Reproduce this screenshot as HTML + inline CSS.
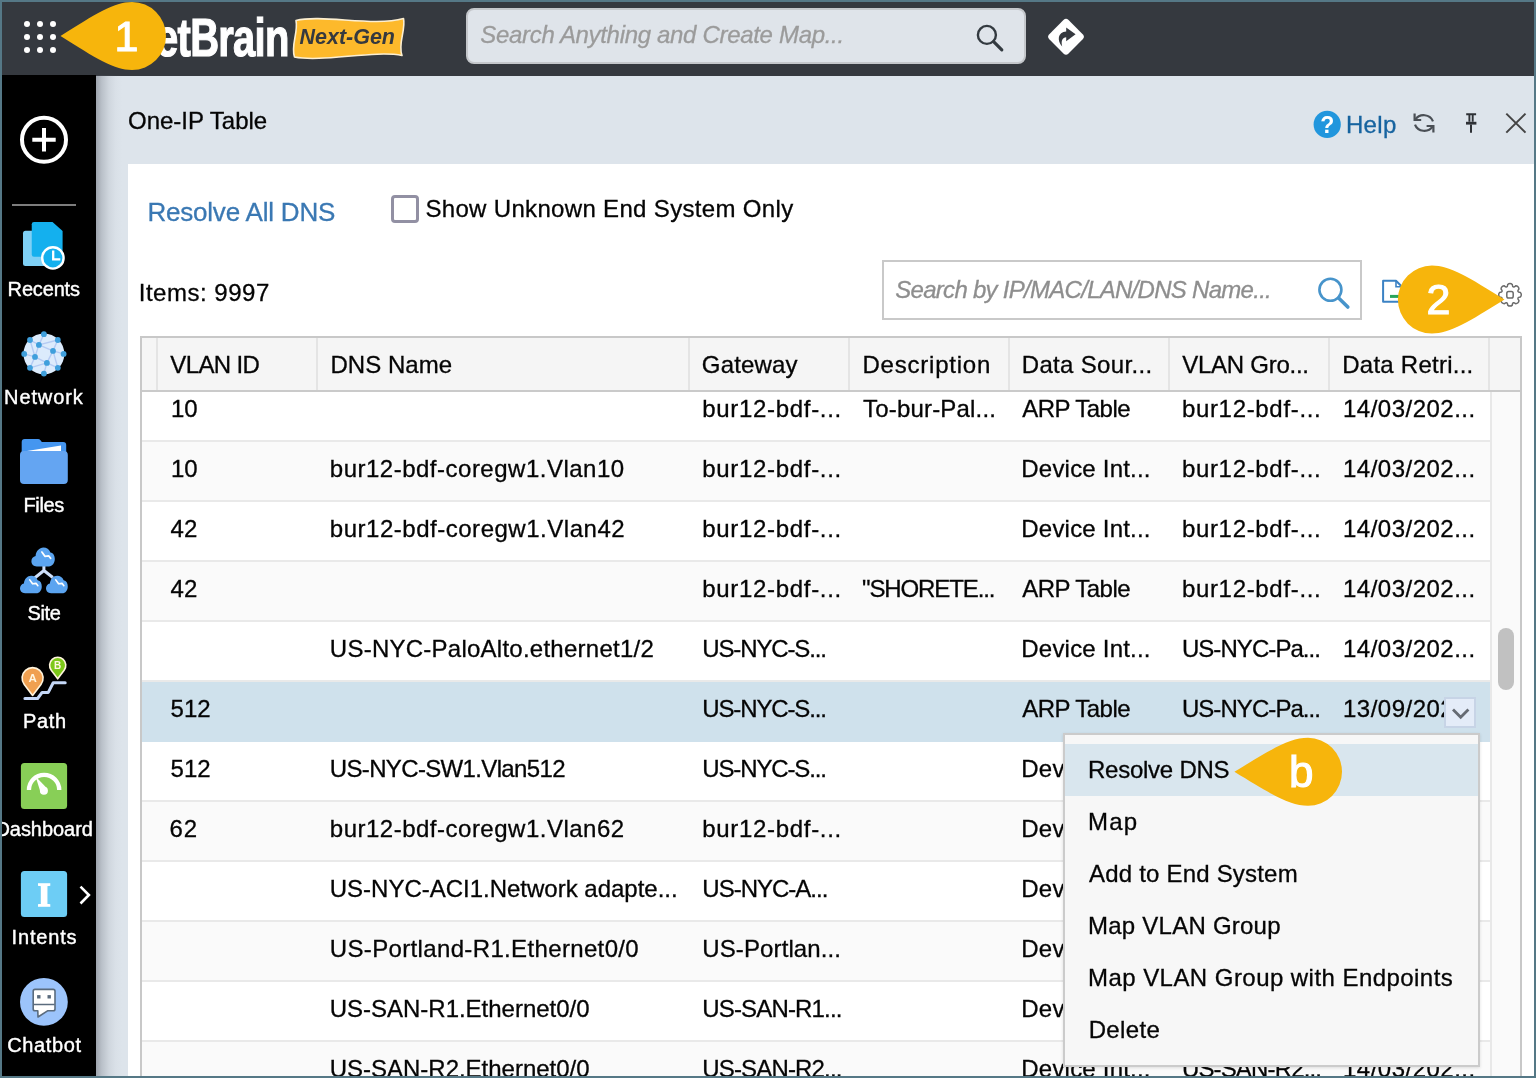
<!DOCTYPE html>
<html lang="en">
<head>
<meta charset="utf-8">
<title>One-IP Table</title>
<style>
*{box-sizing:border-box;margin:0;padding:0}
html,body{width:1536px;height:1078px;overflow:hidden}
body{position:relative;background:#dde4eb;font-family:"Liberation Sans",sans-serif;color:#111}
.abs{position:absolute}
.t{position:absolute;white-space:pre;font-weight:normal;text-decoration:none;display:block;-webkit-text-stroke:.3px currentColor}
#app{position:absolute;left:0;top:0;width:1536px;height:1078px;background:#dde4eb;overflow:hidden;will-change:transform}
#frame{position:absolute;left:0;top:0;width:1536px;height:1078px;border:2px solid #557886;pointer-events:none}
/* header */
#hdr{position:absolute;left:0;top:0;width:1536px;height:75.500px;background:#35393f}
#logo{position:absolute;left:128px;top:6.500px;font-size:54px;font-weight:bold;color:#fff;letter-spacing:-1px;-webkit-text-stroke:1.2px #fff;transform-origin:0 0;transform:scaleX(.74);white-space:nowrap;line-height:60px}
#search{position:absolute;left:466px;top:8px;width:560px;height:56px;background:#dfe4ea;border:2px solid #c4c7cb;border-radius:8px}
/* sidebar */
#side{position:absolute;left:0;top:75px;width:96px;height:1003px;background:#000;overflow:hidden}
#sideshadow{position:absolute;left:96px;top:75px;width:26px;height:1003px;background:linear-gradient(to right,rgba(70,76,88,.42),rgba(90,96,108,.27) 22%,rgba(110,116,128,.12) 50%,rgba(120,126,138,.04) 75%,rgba(120,126,138,0))}
#side .sep{position:absolute;left:12px;top:129px;width:64px;height:2px;background:#7d7d7d}
.nav{position:absolute;left:0;top:0;width:96px;height:0}
.lbl{-webkit-text-stroke:.4px #fff}
/* panel */
#panel{position:absolute;left:128px;top:164px;width:1408px;height:914px;background:#fff}
.cb{position:absolute;left:263px;top:31px;width:28px;height:28px;border:3px solid #9290a3;border-radius:4px;background:#fff}
#psearch{position:absolute;left:754px;top:96px;width:480px;height:60px;border:2px solid #c9c9c9;background:#fff}
/* table */
#tbl{position:absolute;left:12px;top:172px;width:1382px;height:760px;border:2px solid #c8c8c8;border-bottom:none;background:#fff;overflow:hidden}
#thead{position:absolute;left:0;top:0;width:1378px;height:54px;background:#f5f5f5;border-bottom:2px solid #cacaca}
#thead .vs{position:absolute;top:0;width:2px;height:52px;background:#e4e4e4}
#tbody{position:absolute;left:0;top:54px;width:1348px;height:700px;overflow:hidden}
.row{position:absolute;left:0;width:1348px;height:60px;border-bottom:2px solid #e9e9e9;background:#fff;overflow:hidden}
.row.alt{background:#fafafa}
.row.sel{background:#cfe1ec;border-bottom-color:#cfe1ec}
#vscroll{position:absolute;left:1348px;top:54px;width:30px;height:700px;background:#fafafa;border-left:2px solid #e8e8e8}
#vscroll i{position:absolute;left:6px;top:236px;width:16px;height:62px;border-radius:8px;background:#c1c1c1}
.dropbtn{position:absolute;left:1301.500px;top:14.500px;width:32px;height:31px;background:#e4ecf8;border:2px solid #c7d4e6}
/* menu */
#menu{position:absolute;left:1063px;top:733px;width:417px;height:334px;background:#f7f7f7;border:2px solid #cbcbcb;list-style:none;padding-top:9px;box-shadow:0 1px 3px rgba(0,0,0,.12)}
#menu li{position:relative;height:52px;width:413px}
#menu li.hot{background:#d9e6ee}
</style>
</head>
<body>
<div id="app">
<header id="hdr">
<svg class="abs" style="left:20px;top:16px" width="44" height="44" viewBox="20 16 44 44"><g fill="#fff"><circle cx="27" cy="24" r="3"/><circle cx="40" cy="24" r="3"/><circle cx="53" cy="24" r="3"/><circle cx="27" cy="37" r="3"/><circle cx="40" cy="37" r="3"/><circle cx="53" cy="37" r="3"/><circle cx="27" cy="50" r="3"/><circle cx="40" cy="50" r="3"/><circle cx="53" cy="50" r="3"/></g></svg>
<div id="logo">NetBrain</div>
<svg class="abs" style="left:288px;top:12px" width="124" height="52" viewBox="288 12 124 52"><path d="M296 20.5 C322 14 374 27 403.500 18.500 C406 30 397.500 44 402 55.500 C374 50 322 62.500 294.500 57 C290.500 46 298.500 32 296 20.500 Z" fill="#fdb92b" stroke="#fcefd2" stroke-width="1.6" stroke-linejoin="round"/><text x="299.5" y="43.7" font-family="Liberation Sans, sans-serif" font-weight="bold" font-style="italic" font-size="21.5" fill="#35393f" textLength="95.5" lengthAdjust="spacingAndGlyphs">Next-Gen</text></svg>
<div id="search"><span class="t" style="left:12.3px;top:12.7px;font-size:24px;line-height:24px;letter-spacing:-0.32px;color:#9b9b9b;font-style:italic;">Search Anything and Create Map...</span><svg class="abs" style="left:502px;top:8px" width="40" height="40" viewBox="970 18 40 40"><circle cx="986.9" cy="34.9" r="9" fill="none" stroke="#333a40" stroke-width="2.4"/><path d="M993.600 41.600 L1001.800 49.800" stroke="#333a40" stroke-width="3.2" stroke-linecap="round"/></svg></div>
<svg class="abs" style="left:1044px;top:14px" width="44" height="46" viewBox="1044 14 44 46"><rect x="1052.400" y="23.200" width="27.200" height="27.200" rx="3.600" transform="rotate(45 1066 36.800)" fill="#fff"/><path d="M1062.200 46.400 C1056.800 41 1057.600 32 1066.200 31.600 L1066.200 27.400 L1075.600 34.300 L1066.200 41.200 L1066.200 37.200 C1062.600 37.300 1060.800 40.500 1062.200 46.400 Z" fill="#35393f"/></svg>
</header>
<nav id="side">
<svg class="abs" style="left:18px;top:39px" width="52" height="52" viewBox="18 114 52 52"><circle cx="44" cy="139.800" r="22" fill="none" stroke="#fff" stroke-width="4"/><path d="M32.300 139.800 H55.700 M44 128.100 V151.500" stroke="#fff" stroke-width="4"/></svg>
<div class="sep"></div>
<div class="nav"><svg class="abs" style="left:20px;top:143px" width="50" height="54" viewBox="20 218 50 54"><rect x="23" y="230.800" width="30" height="35.200" rx="2.5" fill="#7fd0f5"/><path d="M34 222 H52.500 L62.600 231.100 V254.500 Q62.600 256.750 60.400 256.750 H34 Q31.750 256.750 31.750 254.500 V224.200 Q31.750 222 34 222 Z" fill="#14b0ee"/><circle cx="52.900" cy="257.900" r="10.700" fill="#14b0ee" stroke="#fff" stroke-width="2.400"/><path d="M53.200 250.600 V259.400 H60.300" fill="none" stroke="#fff" stroke-width="2.300"/></svg><span class="t lbl" style="left:7.6px;top:203.6px;font-size:20px;line-height:20px;letter-spacing:-0.16px;color:#fff;">Recents</span></div>
<div class="nav"><svg class="abs" style="left:18px;top:253px" width="52" height="52" viewBox="18 328 52 52"><circle cx="43.9" cy="353.9" r="20.400" fill="#dcebfc"/><path d="M43.9 334.2L38.9 344.9M30.0 340.0L38.9 344.9M30.0 340.0L35.0 356.9M38.9 344.9L35.0 356.9M38.9 344.9L53.0 350.9M57.8 340.0L53.0 350.9M63.6 353.9L53.0 350.9M53.0 350.9L46.9 362.9M35.0 356.9L46.9 362.9M24.2 353.9L35.0 356.9M30.0 367.8L35.0 356.9M30.0 367.8L46.9 362.9M43.9 373.6L46.9 362.9M57.8 367.8L46.9 362.9M57.8 367.8L53.0 350.9M57.8 340.0L38.9 344.9" stroke="#b5cbf3" stroke-width="1.400" fill="none"/><circle cx="43.9" cy="334.2" r="2.900" fill="#3f9fdc"/><circle cx="57.8" cy="340.0" r="2.900" fill="#3f9fdc"/><circle cx="63.6" cy="353.9" r="2.900" fill="#3f9fdc"/><circle cx="57.8" cy="367.8" r="2.900" fill="#3f9fdc"/><circle cx="43.9" cy="373.6" r="2.900" fill="#3f9fdc"/><circle cx="30.0" cy="367.8" r="2.900" fill="#3f9fdc"/><circle cx="24.2" cy="353.9" r="2.900" fill="#3f9fdc"/><circle cx="30.0" cy="340.0" r="2.900" fill="#3f9fdc"/><circle cx="38.9" cy="344.9" r="2.900" fill="#3f9fdc"/><circle cx="53.0" cy="350.9" r="2.900" fill="#3f9fdc"/><circle cx="35.0" cy="356.9" r="2.900" fill="#3f9fdc"/><circle cx="46.9" cy="362.9" r="2.900" fill="#3f9fdc"/></svg><span class="t lbl" style="left:4.1px;top:311.6px;font-size:20px;line-height:20px;letter-spacing:0.88px;color:#fff;">Network</span></div>
<div class="nav"><svg class="abs" style="left:18px;top:361px" width="52" height="50" viewBox="18 436 52 50"><path d="M24.700 439 H38 Q39.500 439 40.500 440.300 L41.800 442 H63.200 Q66.200 442 66.200 445 V470 H21.700 V442 Q21.700 439 24.700 439 Z" fill="#4596f0"/><path d="M26.900 450.900 L61 445.600 V452 H26.900 Z" fill="#fff"/><rect x="20" y="451" width="47.800" height="33" rx="4" fill="#64a5f2"/></svg><span class="t lbl" style="left:23.5px;top:419.6px;font-size:20px;line-height:20px;letter-spacing:-0.36px;color:#fff;">Files</span></div>
<div class="nav"><svg class="abs" style="left:18px;top:469px" width="52" height="52" viewBox="18 544 52 52"><path d="M43.900 565 V570.500 M43.900 570.500 L34 578.500 M43.900 570.500 L52.800 577.500" stroke="#cfe0fa" stroke-width="3" fill="none"/><g transform="translate(31.4 547.6) scale(1.0)"><path d="M5.500 18.800 C1.800 18.800 0 16.400 0 13.600 C0 10.800 1.800 8.800 4.200 8.300 C4.600 3.600 8 0 12 0 C15.300 0 17.800 1.800 19 4.800 C22 5.200 23.400 8 23.400 11.500 C23.400 15.600 21 18.800 17.500 18.800 Z" fill="#5ba4f0"/><path d="M10.500 4.500 L13.500 8.700 L17.200 8.200 L19.200 10.700" fill="none" stroke="#fff" stroke-width="1.800" stroke-linecap="round" stroke-linejoin="round"/></g><g transform="translate(20 575.7) scale(0.93)"><path d="M5.500 18.800 C1.800 18.800 0 16.400 0 13.600 C0 10.800 1.800 8.800 4.200 8.300 C4.600 3.600 8 0 12 0 C15.300 0 17.800 1.800 19 4.800 C22 5.200 23.400 8 23.400 11.500 C23.400 15.600 21 18.800 17.500 18.800 Z" fill="#5ba4f0"/><path d="M10.500 4.500 L13.500 8.700 L17.200 8.200 L19.200 10.700" fill="none" stroke="#fff" stroke-width="1.800" stroke-linecap="round" stroke-linejoin="round"/></g><g transform="translate(46 575.7) scale(0.93)"><path d="M5.500 18.800 C1.800 18.800 0 16.400 0 13.600 C0 10.800 1.800 8.800 4.200 8.300 C4.600 3.600 8 0 12 0 C15.300 0 17.800 1.800 19 4.800 C22 5.200 23.400 8 23.400 11.500 C23.400 15.600 21 18.800 17.500 18.800 Z" fill="#5ba4f0"/><path d="M10.500 4.500 L13.500 8.700 L17.200 8.200 L19.200 10.700" fill="none" stroke="#fff" stroke-width="1.800" stroke-linecap="round" stroke-linejoin="round"/></g></svg><span class="t lbl" style="left:27.5px;top:527.6px;font-size:20px;line-height:20px;letter-spacing:-0.35px;color:#fff;">Site</span></div>
<div class="nav"><svg class="abs" style="left:18px;top:577px" width="52" height="52" viewBox="18 652 52 52"><path d="M24.900 698.500 H37.600 L42.100 692.400 H48.300 L53.200 682.700 H65.200" fill="none" stroke="#c5d8f8" stroke-width="3" stroke-linecap="round" stroke-linejoin="round"/><path d="M32.6 695.4 L24.26 684.47 A10.5 10.5 0 1 1 40.94 684.47 Z" fill="#f0a050" stroke="#fff4dc" stroke-width="1.600" stroke-linejoin="round"/><text x="32.6" y="682.2" text-anchor="middle" font-family="Liberation Sans, sans-serif" font-weight="bold" font-size="11.5" fill="#fff6e0">A</text><path d="M57.7 678.8 L51.25 670.30 A8.1 8.1 0 1 1 64.15 670.30 Z" fill="#7dc818" stroke="#fff4dc" stroke-width="1.600" stroke-linejoin="round"/><text x="57.7" y="669.0" text-anchor="middle" font-family="Liberation Sans, sans-serif" font-weight="bold" font-size="10" fill="#fff6e0">B</text></svg><span class="t lbl" style="left:23.0px;top:635.6px;font-size:20px;line-height:20px;letter-spacing:0.66px;color:#fff;">Path</span></div>
<div class="nav"><svg class="abs" style="left:18px;top:685px" width="52" height="52" viewBox="18 760 52 52"><rect x="20.900" y="762.900" width="46.200" height="46.200" rx="3.500" fill="#88cf57"/><path d="M28.950 790 A15.150 15.150 0 0 1 59.250 790" fill="none" stroke="#fff" stroke-width="4.300"/><circle cx="43.900" cy="790.800" r="4" fill="#fff"/><path d="M35.600 776.400 L47.400 788.800 L40.600 792.600 Z" fill="#fff"/></svg><span class="t lbl" style="left:-4.6px;top:743.6px;font-size:20px;line-height:20px;letter-spacing:-0.04px;color:#fff;">Dashboard</span></div>
<div class="nav"><svg class="abs" style="left:18px;top:793px" width="76" height="52" viewBox="18 868 76 52"><rect x="20.900" y="870.900" width="46.200" height="46.200" rx="3.500" fill="#6dcdf5"/><text x="44.100" y="905.600" text-anchor="middle" font-family="Liberation Serif, serif" font-weight="bold" font-size="34" fill="#fff" stroke="#fff" stroke-width="1.3" stroke-linejoin="miter">I</text><path d="M80.500 886.600 L88.900 895 L80.500 903.500" fill="none" stroke="#fff" stroke-width="2.600"/></svg><span class="t lbl" style="left:11.6px;top:851.6px;font-size:20px;line-height:20px;letter-spacing:0.81px;color:#fff;">Intents</span></div>
<div class="nav"><svg class="abs" style="left:18px;top:901px" width="52" height="52" viewBox="18 976 52 52"><circle cx="43.900" cy="1001.900" r="23.900" fill="#9cc4fb"/><path d="M35 989.400 H53.200 Q55 989.400 55 991.200 V1009 Q55 1010.800 53.200 1010.800 H47.500 L38 1017 L37.800 1010.800 H35 Q33.200 1010.800 33.200 1009 V991.200 Q33.200 989.400 35 989.400 Z" fill="#fff" stroke="#5a6b7d" stroke-width="1.600" stroke-linejoin="round"/><path d="M33.500 1004.500 H54.700" stroke="#5a6b7d" stroke-width="1.500"/><rect x="37.100" y="995.100" width="3.400" height="3.400" fill="#5a6b7d"/><rect x="47.500" y="995.100" width="3.400" height="3.400" fill="#5a6b7d"/></svg><span class="t lbl" style="left:7.2px;top:959.6px;font-size:20px;line-height:20px;letter-spacing:0.65px;color:#fff;">Chatbot</span></div>
</nav>
<div id="sideshadow"></div>
<h1 class="t" style="left:128.0px;top:108.5px;font-size:24px;line-height:24px;color:#050505;">One-IP Table</h1>
<svg class="abs" style="left:1312px;top:110px" width="30" height="30" viewBox="1312 110 30 30"><circle cx="1327.200" cy="124.400" r="13.600" fill="#2196dd"/><text x="1327.200" y="132.600" text-anchor="middle" font-family="Liberation Sans, sans-serif" font-weight="bold" font-size="23" fill="#fff">?</text></svg><svg class="abs" style="left:1410px;top:108px" width="120" height="30" viewBox="1410 108 120 30"><g fill="none" stroke="#4a4f55" stroke-width="2.200"><path d="M1414.600 113.400 V120 H1421.200"/><path d="M1415.300 119.600 A9.900 9.400 0 0 1 1433 121.400"/><path d="M1433.400 132.600 V126 H1426.600"/><path d="M1432.700 126.400 A9.900 9.400 0 0 1 1415 124.600"/></g><g fill="none" stroke="#2e3136" stroke-width="1.900"><path d="M1466.200 114.300 H1476.100 M1469.400 115 V121.800 M1472.700 115 V121.800"/><path d="M1466 123.200 H1476.400" stroke-width="2.800"/><path d="M1471 124.400 V132.700" stroke-width="2"/></g><path d="M1506.300 113.600 L1525.500 132.600 M1525.500 113.600 L1506.300 132.600" stroke="#444" stroke-width="2" fill="none"/></svg><a class="t" style="left:1345.9px;top:113.0px;font-size:24px;line-height:24px;letter-spacing:0.36px;color:#16639f;">Help</a>
<section id="panel">
<a class="t" style="left:19.4px;top:35.0px;font-size:26px;line-height:26px;letter-spacing:-0.20px;color:#3a78b3;">Resolve All DNS</a>
<span class="cb"></span>
<label class="t" style="left:297.4px;top:32.9px;font-size:24px;line-height:24px;letter-spacing:0.33px;color:#050505;">Show Unknown End System Only</label>
<span class="t" style="left:10.7px;top:116.5px;font-size:24px;line-height:24px;letter-spacing:0.52px;color:#050505;">Items: 9997</span>
<div id="psearch"><span class="t" style="left:11.3px;top:16.2px;font-size:24px;line-height:24px;letter-spacing:-0.72px;color:#8e8e8e;font-style:italic;">Search by IP/MAC/LAN/DNS Name...</span><svg class="abs" style="left:430px;top:10px" width="40" height="40" viewBox="1314 272 40 40"><circle cx="1330.400" cy="289.800" r="11" fill="none" stroke="#4794cb" stroke-width="2.600"/><path d="M1338.600 298 L1347.800 307" stroke="#4794cb" stroke-width="3.600" stroke-linecap="round"/></svg></div>
<svg class="abs" style="left:1250px;top:112px" width="30" height="30" viewBox="1378 276 30 30"><path d="M1383.100 280.700 H1396 L1402 286.700 V301.700 H1383.100 Z" fill="#fff" stroke="#3b82c4" stroke-width="2" stroke-linejoin="round"/><path d="M1396 280.700 V286.700 H1402" fill="none" stroke="#3b82c4" stroke-width="1.600"/><path d="M1390 296.400 H1404" stroke="#2aa55a" stroke-width="3"/></svg>
<svg class="abs" style="left:1368px;top:117px" width="28" height="28" viewBox="1496 281 28 28"><path d="M1520.35 292.53A3.2 3.2 0 0 1 1520.35 297.07Q1516.21 297.37 1518.93 300.51A3.2 3.2 0 0 1 1515.71 303.73Q1512.57 301.01 1512.27 305.15A3.2 3.2 0 0 1 1507.73 305.15Q1507.43 301.01 1504.29 303.73A3.2 3.2 0 0 1 1501.07 300.51Q1503.79 297.37 1499.65 297.07A3.2 3.2 0 0 1 1499.65 292.53Q1503.79 292.23 1501.07 289.09A3.2 3.2 0 0 1 1504.29 285.87Q1507.43 288.59 1507.73 284.45A3.2 3.2 0 0 1 1512.27 284.45Q1512.57 288.59 1515.71 285.87A3.2 3.2 0 0 1 1518.93 289.09Q1516.21 292.23 1520.35 292.53Z" fill="none" stroke="#6b6b6b" stroke-width="1.500"/><rect x="1506.8" y="291.6" width="6.400" height="6.400" rx="1.800" fill="none" stroke="#6b6b6b" stroke-width="1.500"/></svg>
<div id="tbl">
<div id="tbody">
<div class="row" style="top:-10px"><span class="t c0" style="left:29.0px;top:14.7px;font-size:24px;line-height:24px;letter-spacing:-0.15px;color:#050505;">10</span><span class="t c2" style="left:560.3px;top:14.7px;font-size:24px;line-height:24px;letter-spacing:0.68px;color:#050505;">bur12-bdf-...</span><span class="t c3" style="left:721.0px;top:14.7px;font-size:24px;line-height:24px;letter-spacing:0.19px;color:#050505;">To-bur-Pal...</span><span class="t c4" style="left:880.3px;top:14.7px;font-size:24px;line-height:24px;letter-spacing:-0.53px;color:#050505;">ARP Table</span><span class="t c5" style="left:1039.9px;top:14.7px;font-size:24px;line-height:24px;letter-spacing:0.68px;color:#050505;">bur12-bdf-...</span><span class="t c6" style="left:1201.0px;top:14.7px;font-size:24px;line-height:24px;letter-spacing:0.49px;color:#050505;">14/03/202...</span></div>
<div class="row alt" style="top:50px"><span class="t c0" style="left:29.0px;top:14.7px;font-size:24px;line-height:24px;letter-spacing:-0.15px;color:#050505;">10</span><span class="t c1" style="left:187.8px;top:14.7px;font-size:24px;line-height:24px;letter-spacing:0.50px;color:#050505;">bur12-bdf-coregw1.Vlan10</span><span class="t c2" style="left:560.3px;top:14.7px;font-size:24px;line-height:24px;letter-spacing:0.68px;color:#050505;">bur12-bdf-...</span><span class="t c4" style="left:879.3px;top:14.7px;font-size:24px;line-height:24px;letter-spacing:0.21px;color:#050505;">Device Int...</span><span class="t c5" style="left:1039.9px;top:14.7px;font-size:24px;line-height:24px;letter-spacing:0.68px;color:#050505;">bur12-bdf-...</span><span class="t c6" style="left:1201.0px;top:14.7px;font-size:24px;line-height:24px;letter-spacing:0.49px;color:#050505;">14/03/202...</span></div>
<div class="row" style="top:110px"><span class="t c0" style="left:28.5px;top:14.7px;font-size:24px;line-height:24px;letter-spacing:0.15px;color:#050505;">42</span><span class="t c1" style="left:187.8px;top:14.7px;font-size:24px;line-height:24px;letter-spacing:0.52px;color:#050505;">bur12-bdf-coregw1.Vlan42</span><span class="t c2" style="left:560.3px;top:14.7px;font-size:24px;line-height:24px;letter-spacing:0.68px;color:#050505;">bur12-bdf-...</span><span class="t c4" style="left:879.3px;top:14.7px;font-size:24px;line-height:24px;letter-spacing:0.21px;color:#050505;">Device Int...</span><span class="t c5" style="left:1039.9px;top:14.7px;font-size:24px;line-height:24px;letter-spacing:0.68px;color:#050505;">bur12-bdf-...</span><span class="t c6" style="left:1201.0px;top:14.7px;font-size:24px;line-height:24px;letter-spacing:0.49px;color:#050505;">14/03/202...</span></div>
<div class="row alt" style="top:170px"><span class="t c0" style="left:28.5px;top:14.7px;font-size:24px;line-height:24px;letter-spacing:0.15px;color:#050505;">42</span><span class="t c2" style="left:560.3px;top:14.7px;font-size:24px;line-height:24px;letter-spacing:0.68px;color:#050505;">bur12-bdf-...</span><span class="t c3" style="left:720.0px;top:14.7px;font-size:24px;line-height:24px;letter-spacing:-1.11px;color:#050505;">"SHORETE...</span><span class="t c4" style="left:880.3px;top:14.7px;font-size:24px;line-height:24px;letter-spacing:-0.53px;color:#050505;">ARP Table</span><span class="t c5" style="left:1039.9px;top:14.7px;font-size:24px;line-height:24px;letter-spacing:0.68px;color:#050505;">bur12-bdf-...</span><span class="t c6" style="left:1201.0px;top:14.7px;font-size:24px;line-height:24px;letter-spacing:0.49px;color:#050505;">14/03/202...</span></div>
<div class="row" style="top:230px"><span class="t c1" style="left:187.8px;top:14.7px;font-size:24px;line-height:24px;letter-spacing:0.25px;color:#050505;">US-NYC-PaloAlto.ethernet1/2</span><span class="t c2" style="left:560.3px;top:14.7px;font-size:24px;line-height:24px;letter-spacing:-1.14px;color:#050505;">US-NYC-S...</span><span class="t c4" style="left:879.3px;top:14.7px;font-size:24px;line-height:24px;letter-spacing:0.21px;color:#050505;">Device Int...</span><span class="t c5" style="left:1039.9px;top:14.7px;font-size:24px;line-height:24px;letter-spacing:-0.93px;color:#050505;">US-NYC-Pa...</span><span class="t c6" style="left:1201.0px;top:14.7px;font-size:24px;line-height:24px;letter-spacing:0.49px;color:#050505;">14/03/202...</span></div>
<div class="row alt sel" style="top:290px"><span class="t c0" style="left:28.5px;top:14.7px;font-size:24px;line-height:24px;letter-spacing:0.05px;color:#050505;">512</span><span class="t c2" style="left:560.3px;top:14.7px;font-size:24px;line-height:24px;letter-spacing:-1.14px;color:#050505;">US-NYC-S...</span><span class="t c4" style="left:880.3px;top:14.7px;font-size:24px;line-height:24px;letter-spacing:-0.53px;color:#050505;">ARP Table</span><span class="t c5" style="left:1039.9px;top:14.7px;font-size:24px;line-height:24px;letter-spacing:-0.93px;color:#050505;">US-NYC-Pa...</span><span class="t c6" style="left:1201.0px;top:14.7px;font-size:24px;line-height:24px;letter-spacing:0.49px;color:#050505;">13/09/202...</span><span class="dropbtn"><svg class="abs" style="left:3px;top:6px" width="24" height="18" viewBox="0 0 24 18"><path d="M4 4.500 L11.700 12.200 L19.400 4.500" fill="none" stroke="#666b73" stroke-width="2.800"/></svg></span></div>
<div class="row" style="top:350px"><span class="t c0" style="left:28.5px;top:14.7px;font-size:24px;line-height:24px;letter-spacing:0.05px;color:#050505;">512</span><span class="t c1" style="left:187.8px;top:14.7px;font-size:24px;line-height:24px;letter-spacing:-0.65px;color:#050505;">US-NYC-SW1.Vlan512</span><span class="t c2" style="left:560.3px;top:14.7px;font-size:24px;line-height:24px;letter-spacing:-1.14px;color:#050505;">US-NYC-S...</span><span class="t c4" style="left:879.3px;top:14.7px;font-size:24px;line-height:24px;letter-spacing:0.21px;color:#050505;">Device Int...</span></div>
<div class="row alt" style="top:410px"><span class="t c0" style="left:27.5px;top:14.7px;font-size:24px;line-height:24px;letter-spacing:0.85px;color:#050505;">62</span><span class="t c1" style="left:187.8px;top:14.7px;font-size:24px;line-height:24px;letter-spacing:0.50px;color:#050505;">bur12-bdf-coregw1.Vlan62</span><span class="t c2" style="left:560.3px;top:14.7px;font-size:24px;line-height:24px;letter-spacing:0.68px;color:#050505;">bur12-bdf-...</span><span class="t c4" style="left:879.3px;top:14.7px;font-size:24px;line-height:24px;letter-spacing:0.21px;color:#050505;">Device Int...</span></div>
<div class="row" style="top:470px"><span class="t c1" style="left:187.8px;top:14.7px;font-size:24px;line-height:24px;letter-spacing:-0.01px;color:#050505;">US-NYC-ACI1.Network adapte...</span><span class="t c2" style="left:560.3px;top:14.7px;font-size:24px;line-height:24px;letter-spacing:-1.00px;color:#050505;">US-NYC-A...</span><span class="t c4" style="left:879.3px;top:14.7px;font-size:24px;line-height:24px;letter-spacing:0.21px;color:#050505;">Device Int...</span></div>
<div class="row alt" style="top:530px"><span class="t c1" style="left:187.8px;top:14.7px;font-size:24px;line-height:24px;letter-spacing:0.35px;color:#050505;">US-Portland-R1.Ethernet0/0</span><span class="t c2" style="left:560.3px;top:14.7px;font-size:24px;line-height:24px;letter-spacing:0.11px;color:#050505;">US-Portlan...</span><span class="t c4" style="left:879.3px;top:14.7px;font-size:24px;line-height:24px;letter-spacing:0.21px;color:#050505;">Device Int...</span></div>
<div class="row" style="top:590px"><span class="t c1" style="left:187.8px;top:14.7px;font-size:24px;line-height:24px;letter-spacing:-0.02px;color:#050505;">US-SAN-R1.Ethernet0/0</span><span class="t c2" style="left:560.3px;top:14.7px;font-size:24px;line-height:24px;letter-spacing:-0.84px;color:#050505;">US-SAN-R1...</span><span class="t c4" style="left:879.3px;top:14.7px;font-size:24px;line-height:24px;letter-spacing:0.21px;color:#050505;">Device Int...</span></div>
<div class="row alt" style="top:650px"><span class="t c1" style="left:187.8px;top:14.7px;font-size:24px;line-height:24px;letter-spacing:-0.02px;color:#050505;">US-SAN-R2.Ethernet0/0</span><span class="t c2" style="left:560.3px;top:14.7px;font-size:24px;line-height:24px;letter-spacing:-0.84px;color:#050505;">US-SAN-R2...</span><span class="t c4" style="left:879.3px;top:14.7px;font-size:24px;line-height:24px;letter-spacing:0.21px;color:#050505;">Device Int...</span><span class="t c5" style="left:1039.9px;top:14.7px;font-size:24px;line-height:24px;letter-spacing:-0.84px;color:#050505;">US-SAN-R2...</span><span class="t c6" style="left:1201.0px;top:14.7px;font-size:24px;line-height:24px;letter-spacing:0.49px;color:#050505;">14/03/202...</span></div>
</div>
<div id="thead"><i class="vs" style="left:14px"></i><i class="vs" style="left:174px"></i><i class="vs" style="left:546px"></i><i class="vs" style="left:706px"></i><i class="vs" style="left:866px"></i><i class="vs" style="left:1026px"></i><i class="vs" style="left:1186px"></i><i class="vs" style="left:1346px"></i><span class="t" style="left:28.3px;top:14.9px;font-size:24px;line-height:24px;letter-spacing:-0.62px;color:#050505;">VLAN ID</span><span class="t" style="left:188.4px;top:14.9px;font-size:24px;line-height:24px;letter-spacing:0.04px;color:#050505;">DNS Name</span><span class="t" style="left:559.8px;top:14.9px;font-size:24px;line-height:24px;letter-spacing:0.18px;color:#050505;">Gateway</span><span class="t" style="left:720.5px;top:14.9px;font-size:24px;line-height:24px;letter-spacing:0.78px;color:#050505;">Description</span><span class="t" style="left:879.8px;top:14.9px;font-size:24px;line-height:24px;letter-spacing:0.32px;color:#050505;">Data Sour...</span><span class="t" style="left:1040.2px;top:14.9px;font-size:24px;line-height:24px;letter-spacing:-0.26px;color:#050505;">VLAN Gro...</span><span class="t" style="left:1200.3px;top:14.9px;font-size:24px;line-height:24px;letter-spacing:0.24px;color:#050505;">Data Retri...</span></div>
<div id="vscroll"><i></i></div>
</div>
</section>
<ul id="menu">
<li class="mi hot"><span class="t" style="left:23.0px;top:14.3px;font-size:24px;line-height:24px;letter-spacing:-0.25px;color:#050505;">Resolve DNS</span></li>
<li class="mi"><span class="t" style="left:23.0px;top:14.3px;font-size:24px;line-height:24px;letter-spacing:1.23px;color:#050505;">Map</span></li>
<li class="mi"><span class="t" style="left:24.0px;top:14.1px;font-size:24px;line-height:24px;letter-spacing:0.20px;color:#050505;">Add to End System</span></li>
<li class="mi"><span class="t" style="left:23.0px;top:14.1px;font-size:24px;line-height:24px;letter-spacing:0.24px;color:#050505;">Map VLAN Group</span></li>
<li class="mi"><span class="t" style="left:23.0px;top:14.1px;font-size:24px;line-height:24px;letter-spacing:0.45px;color:#050505;">Map VLAN Group with Endpoints</span></li>
<li class="mi"><span class="t" style="left:23.7px;top:14.1px;font-size:24px;line-height:24px;letter-spacing:0.35px;color:#050505;">Delete</span></li>
</ul>
<svg class="abs" style="left:56px;top:0px" width="114" height="74" viewBox="56 0 114 74"><path d="M60.50 36.00 C95.47 14.00 113.93 2.00 132.00 2.00 A34 34 0 0 1 132.00 70.00 C113.93 70.00 95.47 58.00 60.50 36.00 Z" fill="#f7b50c"/><text x="126.500" y="51" text-anchor="middle" font-family="Liberation Sans, sans-serif" font-size="43" fill="#fff" stroke="#fff" stroke-width="1.1">1</text></svg>
<svg class="abs" style="left:1394px;top:262px" width="114" height="76" viewBox="1394 262 114 76"><path d="M1504.50 299.60 C1468.99 277.60 1450.25 265.60 1431.90 265.60 A34 34 0 0 0 1431.90 333.60 C1450.25 333.60 1468.99 321.60 1504.50 299.60 Z" fill="#f7b50c"/><text x="1438.400" y="314.200" text-anchor="middle" font-family="Liberation Sans, sans-serif" font-size="43" fill="#fff" stroke="#fff" stroke-width="1.1">2</text></svg>
<svg class="abs" style="left:1230px;top:734px" width="116" height="76" viewBox="1230 734 116 76"><path d="M1234.40 771.85 C1270.40 749.85 1289.40 737.85 1308.00 737.85 A34 34 0 0 1 1308.00 805.85 C1289.40 805.85 1270.40 793.85 1234.40 771.85 Z" fill="#f7b50c"/><text x="1301.300" y="787.250" text-anchor="middle" font-family="Liberation Sans, sans-serif" font-size="44" fill="#fff" stroke="#fff" stroke-width="1.1">b</text></svg>
</div>
<div id="frame"></div>
</body>
</html>
